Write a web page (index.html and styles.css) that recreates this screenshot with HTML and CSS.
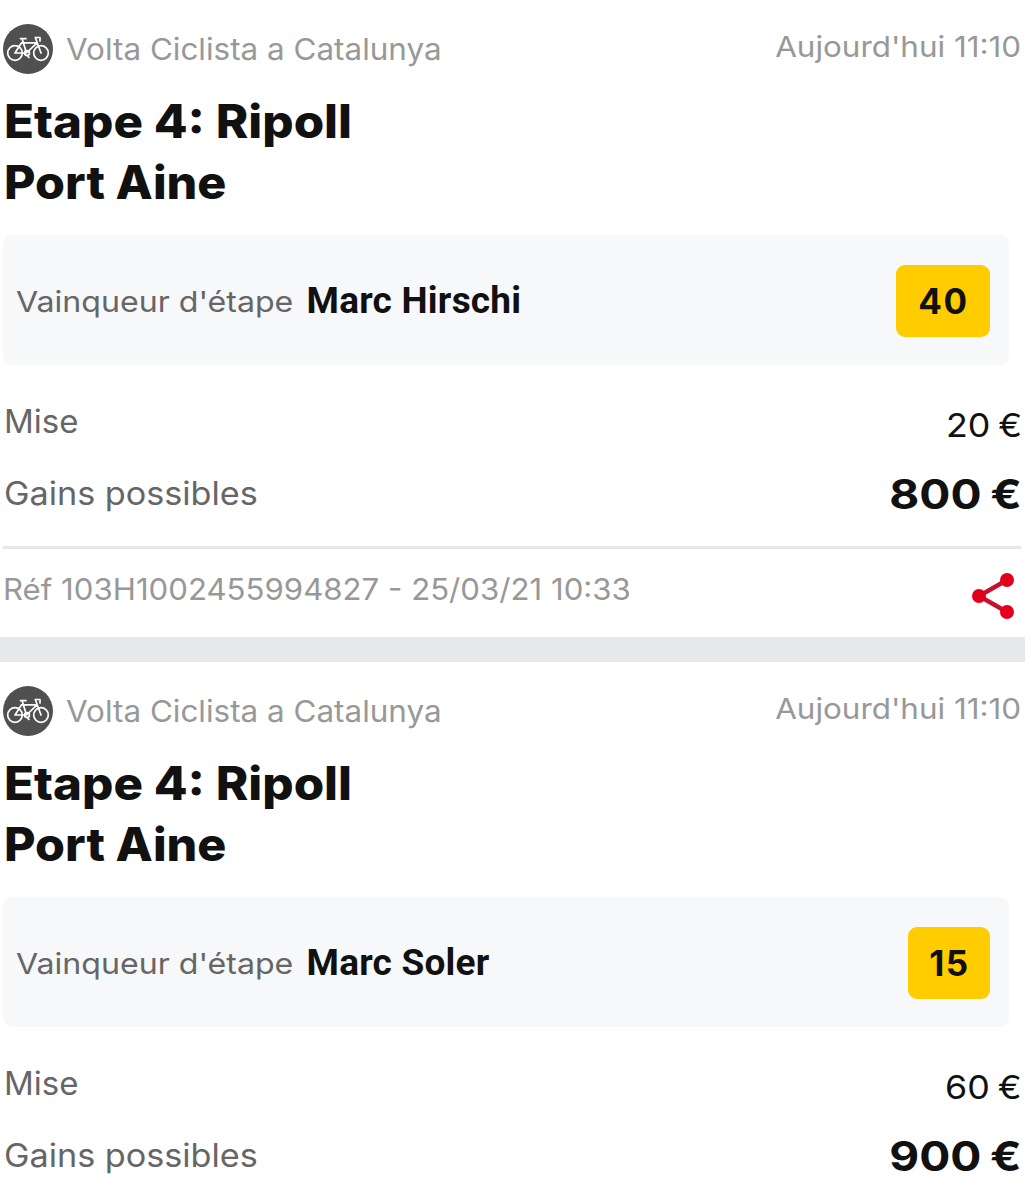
FILE: index.html
```html
<!DOCTYPE html>
<html lang="fr">
<head>
<meta charset="utf-8">
<title>Mes paris</title>
<link rel="stylesheet" href="styles.css">
</head>
<body>
<svg class="defs" width="0" height="0" aria-hidden="true">
  <symbol id="bike" viewBox="0 0 50 50">
    <circle cx="25" cy="25" r="25" fill="#505050"/>
    <g fill="none" stroke="#fff" stroke-width="1.7" stroke-linejoin="round" stroke-linecap="round">
      <circle cx="12" cy="29" r="7.3"/>
      <circle cx="38" cy="29" r="7.3"/>
      <path d="M12 29L18.5 18.8H34M17.5 14.6H23M19.2 15L23.5 29H12M24.5 28L34 18.8M38 29L32.3 13.5H37V17"/>
      <circle cx="24" cy="29" r="2.4"/>
      <path d="M24 31.5L26 33.5"/>
    </g>
  </symbol>
  <symbol id="share" viewBox="0 0 42 46">
    <path d="M35 7L7 23L35 39" fill="none" stroke="#c8102a" stroke-width="4.4"/>
    <g fill="#e2001a"><circle cx="35" cy="7" r="7"/><circle cx="7" cy="23" r="7"/><circle cx="35" cy="39" r="7"/></g>
  </symbol>
</svg>
<main>
  <article class="bet">
    <header class="top">
      <svg class="sport"><use href="#bike"/></svg>
      <span class="league">Volta Ciclista a Catalunya</span>
      <time class="when">Aujourd'hui 11:10</time>
    </header>
    <h2 class="title"><span class="l1">Etape 4: Ripoll</span><br><span class="l2">Port Aine</span></h2>
    <section class="pick">
      <span class="market">Vainqueur d'étape</span>
      <strong class="rider">Marc Hirschi</strong>
      <span class="odds">40</span>
    </section>
    <div class="row stake"><span class="label mise">Mise</span><span class="amount">20 €</span></div>
    <div class="row win"><span class="label gains">Gains possibles</span><strong class="total">800 €</strong></div>
    <footer class="foot"><span class="ref">Réf 103H1002455994827 - 25/03/21 10:33</span><svg class="share"><use href="#share"/></svg></footer>
  </article>
  <article class="bet">
    <header class="top">
      <svg class="sport"><use href="#bike"/></svg>
      <span class="league">Volta Ciclista a Catalunya</span>
      <time class="when">Aujourd'hui 11:10</time>
    </header>
    <h2 class="title"><span class="l1">Etape 4: Ripoll</span><br><span class="l2">Port Aine</span></h2>
    <section class="pick">
      <span class="market">Vainqueur d'étape</span>
      <strong class="rider">Marc Soler</strong>
      <span class="odds narrow">15</span>
    </section>
    <div class="row stake"><span class="label mise">Mise</span><span class="amount">60 €</span></div>
    <div class="row win"><span class="label gains">Gains possibles</span><strong class="total">900 €</strong></div>
  </article>
</main>
</body>
</html>
```

FILE: styles.css
```css
* { box-sizing: border-box; }
body { margin: 0; background: #fff; color: #111; font-family: Inter, "Liberation Sans", sans-serif; white-space: nowrap; }
main { height: 1200px; overflow: hidden; }
.defs { display: block; height: 0; }
.bet { height: 662px; padding: 24px 4px 0 3px; border-bottom: 25px solid #e7e8ea; }
.top { display: flex; height: 50px; color: #989898; }
.sport { width: 50px; height: 50px; margin-right: 13px; }

/* Slightly extended letterforms */
.league, .l1, .l2, .market, .label, .ref { display: inline-block; transform-origin: left center; }
.when, .amount, .total { display: inline-block; transform-origin: right center; }

.league { font-size: 30px; line-height: 51px; transform: scaleX(1.047); }
.when { margin-left: auto; font-size: 29px; line-height: 45px; transform: scaleX(1.083); }
.title { margin: 17px 0 0 -1px; font-size: 46px; line-height: 61px; font-weight: 800; height: 123px; }
.l1 { transform: translateX(2px) scaleX(1.07); }
.l2 { transform: translateX(2px) scaleX(1.053); }
.pick { display: flex; align-items: center; width: 1006px; height: 130px; margin-top: 21px; padding: 1px 19px 0 13px; border-radius: 9px; background: #f7f8fa; }
.market { font-size: 29px; color: #666; padding-top: 1px; margin-right: 28px; transform: scaleX(1.107); }
.rider { font: 700 37px Roboto, sans-serif; margin-left: 12px; letter-spacing: .22px; }
.odds { margin-left: auto; width: 94px; height: 72px; border-radius: 9px; background: #fc0; font-size: 35px; line-height: 72px; font-weight: 700; text-align: center; letter-spacing: 1.5px; text-indent: 1px; }
.odds.narrow { width: 82px; }
.row { display: flex; justify-content: space-between; }
.stake { height: 72px; margin-top: 21px; }
.label { font-size: 32px; line-height: 72px; color: #666; }
.mise { transform: translateX(1px) scaleX(1.03); }
.gains { transform: translateX(1px) scaleX(1.068); }
.amount { font-size: 33px; line-height: 79px; word-spacing: -2px; transform: translateX(1px) scaleX(1.085); }
.win { height: 88px; }
.total { font-size: 41px; line-height: 72px; word-spacing: -2px; transform: translateX(1px) scaleX(1.125); }
.foot { display: flex; justify-content: space-between; height: 90px; border-top: 3px solid #e7e7e7; color: #989898; }
.ref { font-size: 29.5px; line-height: 81px; transform: scaleX(1.057); }
.share { width: 42px; height: 46px; margin: 24px 7px 0 0; }
```
